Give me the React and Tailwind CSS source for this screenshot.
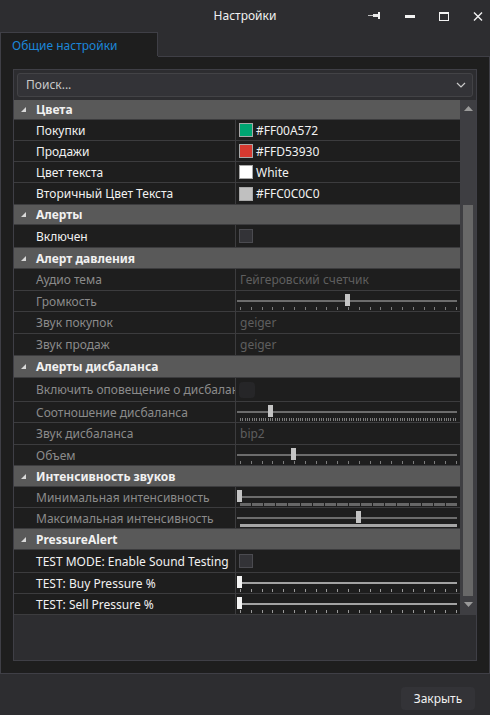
import React from "react";

const font = { fontFamily: '"Noto Sans", "Liberation Sans", sans-serif' };

const rows = [
  { type: "cat", label: "Цвета", h: "h-[20px]" },
  { label: "Покупки", h: "h-[21px]", swatch: "bg-[#00a572]", value: "#FF00A572" },
  { label: "Продажи", h: "h-[21px]", swatch: "bg-[#d53930]", value: "#FFD53930" },
  { label: "Цвет текста", h: "h-[21px]", swatch: "bg-white", value: "White" },
  { label: "Вторичный Цвет Текста", h: "h-[22px]", swatch: "bg-[#c0c0c0]", value: "#FFC0C0C0" },
  { type: "cat", label: "Алерты", h: "h-[20px]" },
  { label: "Включен", h: "h-[23px]", check: "square" },
  { type: "cat", label: "Алерт давления", h: "h-[21px]" },
  { label: "Аудио тема", h: "h-[22px]", dim: true, text: "Гейгеровский счетчик" },
  { label: "Громкость", h: "h-[21px]", dim: true, slider: { value: 0.5, ticks: 21 } },
  { label: "Звук покупок", h: "h-[22px]", dim: true, text: "geiger" },
  { label: "Звук продаж", h: "h-[22px]", dim: true, text: "geiger" },
  { type: "cat", label: "Алерты дисбаланса", h: "h-[22px]" },
  { label: "Включить оповещение о дисбалансе", h: "h-[24px]", dim: true, check: "round" },
  { label: "Соотношение дисбаланса", h: "h-[21px]", dim: true, slider: { value: 0.145, ticks: 94 } },
  { label: "Звук дисбаланса", h: "h-[22px]", dim: true, text: "bip2" },
  { label: "Объем", h: "h-[21px]", dim: true, slider: { value: 0.25, ticks: 21 } },
  { type: "cat", label: "Интенсивность звуков", h: "h-[21px]" },
  { label: "Минимальная интенсивность", h: "h-[21px]", dim: true, slider: { value: 0, style: "segments" } },
  { label: "Максимальная интенсивность", h: "h-[21px]", dim: true, slider: { value: 0.553, style: "solid" } },
  { type: "cat", label: "PressureAlert", h: "h-[21px]" },
  { label: "TEST MODE: Enable Sound Testing", h: "h-[23px]", check: "square" },
  { label: "TEST: Buy Pressure %", h: "h-[21px]", slider: { value: 0, ticks: 21, bright: true } },
  { label: "TEST: Sell Pressure %", h: "h-[21px]", slider: { value: 0, ticks: 21, bright: true } },
];

function Slider({ value, ticks, style, bright }) {
  return (
    <div className="relative h-full w-full">
      <div
        className={`absolute left-[1px] top-[9px] h-[2px] w-[220px] ${
          bright ? "bg-[#a3a3a3]" : "bg-[#6c6c6c]"
        }`}
      />
      <div
        className={`absolute top-[3px] h-[12px] w-[5px] ${
          bright ? "bg-[#f4f4f4]" : "bg-[#c4c4c4]"
        }`}
        style={{ left: 1 + value * 215 }}
      />
      {style === "segments" && (
        <div className="absolute left-[4px] top-[16px] flex h-[3px] w-[217px] gap-px">
          {Array.from({ length: 18 }).map((_, i) => (
            <div key={i} className="flex-1 bg-[#676767]" />
          ))}
        </div>
      )}
      {style === "solid" && (
        <div className="absolute left-[4px] top-[16px] h-[3px] w-[217px] bg-[#a6a6a6]" />
      )}
      {ticks && (
        <div className="absolute left-[4px] top-[16px] flex h-[3px] w-[217px] justify-between">
          {Array.from({ length: ticks }).map((_, i) => (
            <div key={i} className={`w-px ${bright ? "bg-[#9a9a9a]" : "bg-[#7c7c7c]"}`} />
          ))}
        </div>
      )}
    </div>
  );
}

function Value({ row }) {
  if (row.swatch) {
    return (
      <div className="flex h-full items-center gap-[3px] pl-[3px] text-[#f1f1f1]">
        <div className={`h-[14px] w-[14px] border border-[#a8a8a8] ${row.swatch}`} />
        <span className="pt-px">{row.value}</span>
      </div>
    );
  }
  if (row.check === "square") {
    return (
      <div className="flex h-full items-center pl-[3px]">
        <div className="h-[14px] w-[14px] border border-[#4b4b50] bg-[#333337]" />
      </div>
    );
  }
  if (row.check === "round") {
    return (
      <div className="flex h-full items-center pl-[3px]">
        <div className="h-[16px] w-[16px] rounded-[4px] bg-[#262628]" />
      </div>
    );
  }
  if (row.text) {
    return <div className="flex h-full items-center pl-[4px] pt-px text-[#5f5f5f]">{row.text}</div>;
  }
  if (row.slider) return <Slider {...row.slider} />;
  return null;
}

function Row({ row }) {
  if (row.type === "cat") {
    return (
      <div className={`flex ${row.h} items-center border-b border-[#3c3c3e] bg-[#595959] font-bold text-[#f1f1f1]`}>
        <svg width="5" height="5" viewBox="0 0 5 5" className="ml-[7px] mr-[10px]">
          <polygon points="5,0 5,5 0,5" fill="#d8d8d8" />
        </svg>
        <span className="pt-px">{row.label}</span>
      </div>
    );
  }
  return (
    <div className={`flex ${row.h} border-b border-[#3c3c3e] bg-[#1e1e1e]`}>
      <div
        className={`flex w-[222px] shrink-0 items-center overflow-hidden whitespace-nowrap border-r border-[#3c3c3e] pl-[22px] pt-px ${
          row.dim ? "text-[#8b8b8b]" : "text-[#f1f1f1]"
        }`}
      >
        {row.label}
      </div>
      <div className="min-w-0 flex-1">
        <Value row={row} />
      </div>
    </div>
  );
}

export default function App() {
  return (
    <div className="flex h-[715px] w-[490px] flex-col bg-[#2d2d30] text-[12px] text-[#f1f1f1]" style={font}>
      {/* title bar */}
      <div className="grid h-[32px] shrink-0 grid-cols-[1fr_auto_1fr] items-center">
        <div />
        <div className="text-[12px] text-[#f1f1f1]">Настройки</div>
        <div className="flex items-center justify-end pr-[7px]">
          <svg width="14" height="8" viewBox="0 0 14 8">
            <rect x="0" y="3" width="6" height="1" fill="#bdbdbd" />
            <rect x="5" y="2" width="5" height="3" fill="#e8e8e8" />
            <rect x="10" y="0" width="2" height="7" fill="#f2f2f2" />
          </svg>
          <svg width="10" height="3" viewBox="0 0 10 3" className="ml-[23px]">
            <rect width="10" height="3" fill="#f2f2f2" />
          </svg>
          <svg width="10" height="9" viewBox="0 0 10 9" className="ml-[24px]">
            <rect x="0.5" y="0.5" width="9" height="8" fill="none" stroke="#f2f2f2" />
            <rect x="0" y="0" width="10" height="2" fill="#f2f2f2" />
          </svg>
          <svg width="10" height="9" viewBox="0 0 10 9" className="ml-[24px]">
            <path d="M1 0.5 L9 8.5 M9 0.5 L1 8.5" stroke="#f2f2f2" strokeWidth="1.4" />
          </svg>
        </div>
      </div>

      {/* tab strip */}
      <div className="flex h-[24px] shrink-0">
        <div className="flex w-[158px] items-center border-l border-r border-t border-[#3f3f46] bg-[#1e1e1e] pl-[11px] pt-[2px] text-[#1c86d8]">
          Общие настройки
        </div>
      </div>

      {/* tab content */}
      <div className="flex h-[618px] shrink-0 flex-col border border-t-0 border-[#3f3f46] bg-[#1e1e1e] px-[12px] pb-[12px]">
        <div className="flex h-[13px] shrink-0">
          <div className="w-[157px] shrink-0 border-t border-transparent" />
          <div className="-mx-[12px] flex-1 border-t border-[#3f3f46]" />
        </div>
        <div className="flex flex-1 flex-col border border-[#3f3f46] bg-[#2d2d30]">
          {/* search */}
          <div className="mx-[3px] mt-[3px] flex h-[24px] items-center justify-between rounded-[3px] border border-[#434346] bg-[#333337] pl-[8px] pr-[6px] text-[#c9c9c9]">
            <span>Поиск...</span>
            <svg width="10" height="6" viewBox="0 0 10 6">
              <path d="M1 1 L5 5 L9 1" fill="none" stroke="#c9c9c9" strokeWidth="1.2" />
            </svg>
          </div>

          {/* property grid */}
          <div className="mt-[3px] flex h-[515px] overflow-hidden">
            <div className="flex-1">
              {rows.map((r, i) => (
                <Row key={i} row={r} />
              ))}
            </div>
            <div className="flex w-[16px] shrink-0 flex-col items-center bg-[#3e3e42]">
              <svg width="9" height="5" viewBox="0 0 9 5" className="mt-[6px]">
                <polygon points="4.5,0 9,5 0,5" fill="#9a9a9a" />
              </svg>
              <div className="mt-[94px] h-[391px] w-[10px] bg-[#686868]" />
              <svg width="9" height="5" viewBox="0 0 9 5" className="mt-[6px]">
                <polygon points="0,0 9,0 4.5,5" fill="#9a9a9a" />
              </svg>
            </div>
          </div>
        </div>
      </div>

      {/* footer */}
      <div className="flex flex-1 items-start justify-end pr-[15px] pt-[13px]">
        <button className="h-[23px] w-[74px] rounded-[4px] bg-[#333337] text-[12px] text-[#f1f1f1]">
          Закрыть
        </button>
      </div>
    </div>
  );
}
